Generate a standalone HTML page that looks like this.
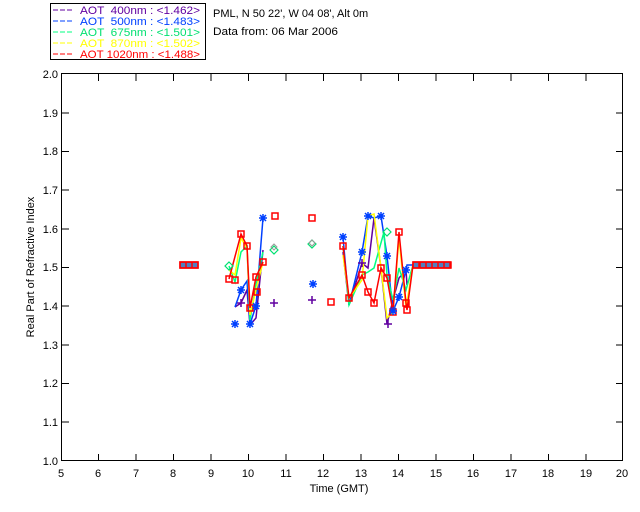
<!DOCTYPE html>
<html><head><style>
body{margin:0;background:#fff;width:640px;height:512px;overflow:hidden}
svg{display:block}
text{font-family:"Liberation Sans",sans-serif;font-size:11px}
</style></head><body>
<svg width="640" height="512" viewBox="0 0 640 512" xmlns="http://www.w3.org/2000/svg">
<rect x="50.5" y="3.5" width="155" height="56" fill="#fff" stroke="#000"/>
<g font-size="11">
<line x1="53" y1="10" x2="73" y2="10" stroke="#6000a0" stroke-dasharray="5,2"/>
<text x="80" y="14" fill="#6000a0" textLength="120" lengthAdjust="spacingAndGlyphs" xml:space="preserve">AOT  400nm : &lt;1.462&gt;</text>
<line x1="53" y1="21" x2="73" y2="21" stroke="#0040ff" stroke-dasharray="5,2"/>
<text x="80" y="25" fill="#0040ff" textLength="120" lengthAdjust="spacingAndGlyphs" xml:space="preserve">AOT  500nm : &lt;1.483&gt;</text>
<line x1="53" y1="32" x2="73" y2="32" stroke="#00ff80" stroke-dasharray="5,2"/>
<text x="80" y="36" fill="#00e070" textLength="120" lengthAdjust="spacingAndGlyphs" xml:space="preserve">AOT  675nm : &lt;1.501&gt;</text>
<line x1="53" y1="43" x2="73" y2="43" stroke="#ffff00" stroke-dasharray="5,2"/>
<text x="80" y="47" fill="#ffff00" textLength="120" lengthAdjust="spacingAndGlyphs" xml:space="preserve">AOT  870nm : &lt;1.502&gt;</text>
<line x1="53" y1="54" x2="73" y2="54" stroke="#ff0000" stroke-dasharray="5,2"/>
<text x="80" y="58" fill="#ff0000" textLength="120" lengthAdjust="spacingAndGlyphs" xml:space="preserve">AOT 1020nm : &lt;1.488&gt;</text>
</g>
<text x="213" y="17" font-size="10.5">PML, N 50 22', W 04 08', Alt 0m</text>
<text x="213" y="35" textLength="125" lengthAdjust="spacingAndGlyphs">Data from: 06 Mar 2006</text>
<rect x="61.5" y="73.5" width="561" height="387" fill="none" stroke="#000"/>
<g stroke="#000">
<path d="M98.5 461v-7M136 461v-7M173.5 461v-7M211 461v-7M248.5 461v-7M286 461v-7M323.5 461v-7M361 461v-7M398.5 461v-7M436 461v-7M473.5 461v-7M511 461v-7M548.5 461v-7M586 461v-7"/>
<path d="M98.5 74v7M136 74v7M173.5 74v7M211 74v7M248.5 74v7M286 74v7M323.5 74v7M361 74v7M398.5 74v7M436 74v7M473.5 74v7M511 74v7M548.5 74v7M586 74v7"/>
<path d="M62 422h7M62 383.5h7M62 345h7M62 306h7M62 267.5h7M62 229h7M62 190h7M62 151.5h7M62 113h7M616 422h7M616 383.5h7M616 345h7M616 306h7M616 267.5h7M616 229h7M616 190h7M616 151.5h7M616 113h7"/>
</g>
<g font-size="11" text-anchor="end">
<text x="58" y="465">1.0</text><text x="58" y="426">1.1</text><text x="58" y="387">1.2</text><text x="58" y="349">1.3</text><text x="58" y="310">1.4</text><text x="58" y="271">1.5</text><text x="58" y="233">1.6</text><text x="58" y="194">1.7</text><text x="58" y="155">1.8</text><text x="58" y="117">1.9</text><text x="58" y="78">2.0</text>
</g>
<g font-size="11" text-anchor="middle">
<text x="61" y="477">5</text><text x="98" y="477">6</text><text x="136" y="477">7</text><text x="173" y="477">8</text><text x="211" y="477">9</text><text x="248" y="477">10</text><text x="286" y="477">11</text><text x="323" y="477">12</text><text x="361" y="477">13</text><text x="398" y="477">14</text><text x="436" y="477">15</text><text x="473" y="477">16</text><text x="511" y="477">17</text><text x="548" y="477">18</text><text x="586" y="477">19</text><text x="622" y="477">20</text>
<text x="339" y="492">Time (GMT)</text>
<text transform="translate(34,267) rotate(-90)">Real Part of Refractive Index</text>
</g>
<g fill="none" stroke-width="1.5">
<polyline stroke="#6000a0" points="235,307 241,303 247,290 250,325 256,318 263,250"/>
<polyline stroke="#0040ff" points="235,307 241,290 247,281 250,324 256,306 263,218"/>
<polyline stroke="#00ff80" points="229,266 235,282 241,252 247,246 250,320 256,284 263,252"/>
<polyline stroke="#ffff00" points="229,270 235,275 241,238 247,248 250,315 256,290 263,262"/>
<polyline stroke="#ff0000" points="229,279 241,234 247,246 250,308 256,277 263,262"/>
<polyline stroke="#6000a0" points="343,252 349,305 362,263 368,268 374,218 381,268 387,324 393,300 399,278 406,270 407,285"/>
<polyline stroke="#0040ff" points="343,237 349,305 362,252 368,216 374,218 381,216 387,256 393,311 399,297 406,270 407,265 413,265"/>
<polyline stroke="#00ff80" points="343,246 349,305 362,275 368,272 374,268 384,232 387,275 393,300 399,268 406,290 413,265"/>
<polyline stroke="#ffff00" points="343,255 349,298 362,280 368,216 374,214 381,268 387,318 393,312 399,238 406,308 413,265"/>
<polyline stroke="#ff0000" points="343,246 349,298 362,275 368,292 374,303 381,268 387,278 393,312 399,232 406,303 407,310 413,265 447,265"/>
</g>
<g fill="#0040ff" stroke="#ff0000" stroke-width="1.5">
<rect x="180" y="262" width="18" height="6" fill="#5080c0"/>
<rect x="413" y="262" width="38" height="6" fill="#5080c0"/>
</g>
<g fill="none" stroke="#ff0000" stroke-width="1.5">
<path d="M180 262h6v6h-6zM186 262h6v6h-6zM192 262h6v6h-6zM413 262h6v6h-6zM420 262h6v6h-6zM426 262h6v6h-6zM432 262h6v6h-6zM438 262h6v6h-6zM444 262h6v6h-6z"/>
<path d="M226 276h6v6h-6zM238 231h6v6h-6zM244 243h6v6h-6zM247 305h6v6h-6zM253 274h6v6h-6zM260 259h6v6h-6zM232 277h6v6h-6zM254 289h6v6h-6zM272 213h6v6h-6zM309 215h6v6h-6z"/>
<path d="M328 299h6v6h-6zM340 243h6v6h-6zM346 295h6v6h-6zM359 272h6v6h-6zM365 289h6v6h-6zM371 300h6v6h-6zM378 265h6v6h-6zM384 275h6v6h-6zM390 309h6v6h-6zM396 229h6v6h-6zM403 300h6v6h-6zM404 307h6v6h-6z"/>
</g>
<g stroke="#0040ff" stroke-width="1.5">
<path d="M259 218h8M263 214v8M260 215l6 6M266 215l-6 6M309 284h8M313 280v8M310 281l6 6M316 281l-6 6M231 324h8M235 320v8M232 321l6 6M238 321l-6 6M246 324h8M250 320v8M247 321l6 6M253 321l-6 6M237 290h8M241 286v8M238 287l6 6M244 287l-6 6M252 306h8M256 302v8M253 303l6 6M259 303l-6 6M339 237h8M343 233v8M340 234l6 6M346 234l-6 6M358 252h8M362 248v8M359 249l6 6M365 249l-6 6M364 216h8M368 212v8M365 213l6 6M371 213l-6 6M377 216h8M381 212v8M378 213l6 6M384 213l-6 6M383 256h8M387 252v8M384 253l6 6M390 253l-6 6M395 297h8M399 293v8M396 294l6 6M402 294l-6 6M402 270h8M406 266v8M403 267l6 6M409 267l-6 6M389 311h8M393 307v8M390 308l6 6M396 308l-6 6"/>
</g>
<g stroke="#6000a0" stroke-width="1.5">
<path d="M270 303h8M274 299v8M308 300h8M312 296v8M237 303h8M241 299v8M358 263h8M362 259v8M384 324h8M388 320v8"/>
</g>
<g fill="none" stroke="#00e070" stroke-width="1.2">
<path d="M312 240l4 4-4 4-4-4zM274 246l4 4-4 4-4-4zM229 262l4 4-4 4-4-4zM387 228l4 4-4 4-4-4z"/>
</g>
<g fill="none" stroke="#999" stroke-width="1">
<path d="M274 244l3 3-3 3-3-3zM312 240l3 3-3 3-3-3z"/>
</g>
</svg>
</body></html>
